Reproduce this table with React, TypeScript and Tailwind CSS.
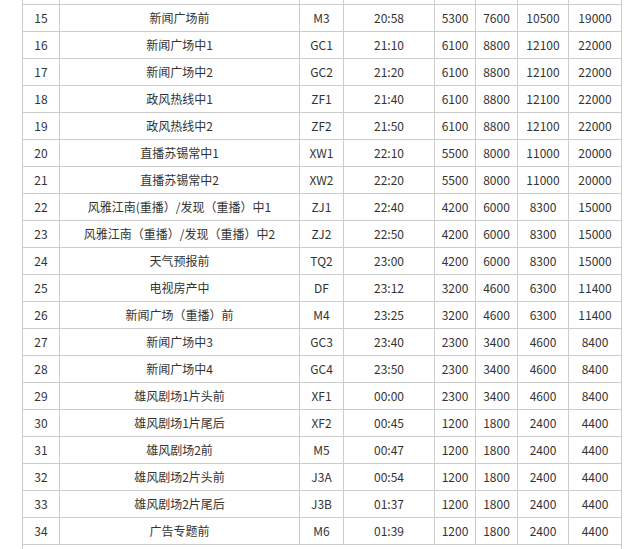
const ROWS: [number, string, string, string, string, string, string, string][] = [
	[15, "新闻广场前", "M3", "20:58", "5300", "7600", "10500", "19000"],
	[16, "新闻广场中1", "GC1", "21:10", "6100", "8800", "12100", "22000"],
	[17, "新闻广场中2", "GC2", "21:20", "6100", "8800", "12100", "22000"],
	[18, "政风热线中1", "ZF1", "21:40", "6100", "8800", "12100", "22000"],
	[19, "政风热线中2", "ZF2", "21:50", "6100", "8800", "12100", "22000"],
	[20, "直播苏锡常中1", "XW1", "22:10", "5500", "8000", "11000", "20000"],
	[21, "直播苏锡常中2", "XW2", "22:20", "5500", "8000", "11000", "20000"],
	[22, "风雅江南(重播）/发现（重播）中1", "ZJ1", "22:40", "4200", "6000", "8300", "15000"],
	[23, "风雅江南（重播）/发现（重播）中2", "ZJ2", "22:50", "4200", "6000", "8300", "15000"],
	[24, "天气预报前", "TQ2", "23:00", "4200", "6000", "8300", "15000"],
	[25, "电视房产中", "DF", "23:12", "3200", "4600", "6300", "11400"],
	[26, "新闻广场（重播）前", "M4", "23:25", "3200", "4600", "6300", "11400"],
	[27, "新闻广场中3", "GC3", "23:40", "2300", "3400", "4600", "8400"],
	[28, "新闻广场中4", "GC4", "23:50", "2300", "3400", "4600", "8400"],
	[29, "雄风剧场1片头前", "XF1", "00:00", "2300", "3400", "4600", "8400"],
	[30, "雄风剧场1片尾后", "XF2", "00:45", "1200", "1800", "2400", "4400"],
	[31, "雄风剧场2前", "M5", "00:47", "1200", "1800", "2400", "4400"],
	[32, "雄风剧场2片头前", "J3A", "00:54", "1200", "1800", "2400", "4400"],
	[33, "雄风剧场2片尾后", "J3B", "01:37", "1200", "1800", "2400", "4400"],
	[34, "广告专题前", "M6", "01:39", "1200", "1800", "2400", "4400"],
];

export default function App() {
	return (
		<div
			className="w-[636px] h-[549px] overflow-hidden bg-white text-[12px] text-[#333]"
			style={{ fontFamily: '"Noto Sans CJK SC", "Liberation Sans", sans-serif' }}
		>
			<div className="ml-[22px] w-[600px] bg-[#cccccc] px-px grid grid-cols-[36px_239px_43px_90px_40px_41px_50px_52px] gap-px">
				{/* previous row, cut off at the top */}
				{Array.from({ length: 8 }).map((_, i) => (
					<div key={`top-${i}`} className="h-[4px] bg-white" />
				))}

				{ROWS.map((row) =>
					row.map((cell, i) => (
						<div
							key={`${row[0]}-${i}`}
							className="h-[26px] bg-white flex items-center justify-center whitespace-nowrap leading-none"
						>
							{cell}
						</div>
					)),
				)}

				{/* next block, cut off at the bottom */}
				<div className="col-span-8 h-[20px] bg-white" />
			</div>
		</div>
	);
}
